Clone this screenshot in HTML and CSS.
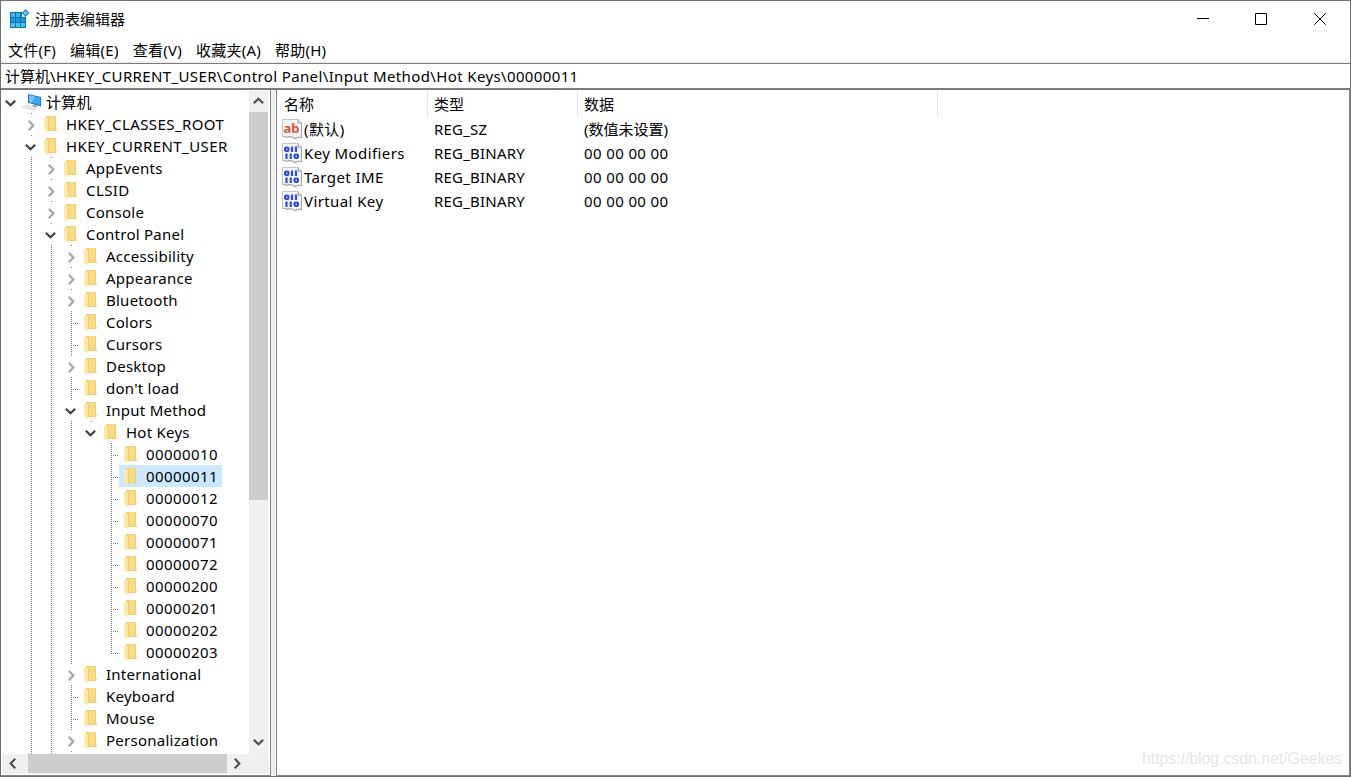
FILE: index.html
```html
<!DOCTYPE html>
<html lang="zh-CN">
<head>
  <meta charset="UTF-8" />
  <title>注册表编辑器</title>
  <link rel="stylesheet" href="styles.css">
</head>
<body>
  <svg class="sprite" aria-hidden="true">
    <symbol id="i-folder" viewBox="0 0 13 17">
      <path d="M2 0h10v12.500h.6v2.500H3z" fill="#f3cf70"/>
      <path d="M5 .5h5.500v13.500H5z" fill="#f9dc8b"/>
      <path d="M0 .8L3.800 2.300v14.700L0 14.800z" fill="#ffe9a8"/>
    </symbol>
    <symbol id="i-down" viewBox="0 0 11 7">
      <path d="M.8.8l4.700 4.500L10.200.8" fill="none" stroke="currentColor" stroke-width="2.200"/>
    </symbol>
    <symbol id="i-right" viewBox="0 0 7 11">
      <path d="M.8.8l4.500 4.700L.8 10.200" fill="none" stroke="currentColor" stroke-width="2.200"/>
    </symbol>
    <symbol id="i-computer" viewBox="0 0 20 18">
      <path d="M6 1l13 3v9.500L6 9.800z" fill="#1878c0"/>
      <path d="M7 2.200l11.200 2.600v7.200L7 8.900z" fill="#3fa9ec"/>
      <path d="M7 2.200l6 1.400-3 6.200-3-.9z" fill="#74c5f8"/>
      <path d="M11 11.500l4 1.200v2l-5-1.500z" fill="#9aa7b1"/>
      <path d="M0 14.200l4.500-2.700 10.500 3.300-3.500 2.700z" fill="#cdd3d8"/>
      <path d="M1.500 13.900l3.200-1.700 8.300 2.600-2 1.300z" fill="#edf0f2"/>
    </symbol>
    <symbol id="i-page" viewBox="0 0 20 20">
      <path d="M.5.5h15.500l3.500 3.500v15l-2.500-1-4 1.500-4-2-4 .8-4.500-1.300z" fill="#f5f5f5" stroke="#c4c4c4"/>
      <path d="M16 .5v3.500h3.500" fill="#e2e2e2" stroke="#999"/>
      <path d="M19.500 4v15l-2.500-1-4 1.500-4-2-4 .8-4.500-1.300" fill="none" stroke="#a0a0a0"/>
    </symbol>
    <symbol id="i-bin" viewBox="0 0 20 20">
      <use href="#i-page"/>
      <g fill="none" stroke="#2e50d8" stroke-width="2.200">
        <rect x="3" y="4.500" width="3.500" height="3.500" rx="1.400"/>
        <path d="M10 3.500V9M14 3.500V9M4.500 10.500V16M8.700 10.500V16"/>
        <rect x="12.500" y="11.500" width="3.500" height="3.500" rx="1.400"/>
      </g>
    </symbol>
  </svg>

  <div class="window">
    <header class="title-bar">
      <svg class="app-icon" viewBox="0 0 20 20">
        <path d="M0 3h12v5h4v11H0z" fill="#0b74ae"/>
        <path d="M1 4h4v4H1zM6 4h4v4H6z" fill="#38b6ea"/>
        <path d="M1 9h4v4H1zM6 9h4v4H6zM11 9h4v4h-4z" fill="#149bd7"/>
        <path d="M1 14h4v4H1zM6 14h4v4H6zM11 14h4v4h-4z" fill="#4cc3f0"/>
        <path d="M15.500 0L19.500 4l-4 4-4-4z" fill="#2a93c0"/>
        <path d="M15.500 2l2 2-2 2-2-2z" fill="#6ed0f3"/>
      </svg>
      <h1>注册表编辑器</h1>
      <div class="window-buttons">
        <svg viewBox="0 0 12 12"><path d="M0 5.500h12"/></svg>
        <svg viewBox="0 0 12 12"><path d="M.5.5h11v11H.5z"/></svg>
        <svg viewBox="0 0 12 12"><path d="M.3.3l11.400 11.400M11.700.3L.3 11.700"/></svg>
      </div>
    </header>
    <nav class="menu">
      <span>文件(F)</span>
      <span>编辑(E)</span>
      <span>查看(V)</span>
      <span>收藏夹(A)</span>
      <span>帮助(H)</span>
    </nav>
    <div class="address">计算机<span class="path">\HKEY_CURRENT_USER\Control Panel\Input Method\Hot Keys\00000011</span></div>

    <main class="panes">
      <section class="tree-pane">
        <div class="tree-row">
          <div id="tree"></div>
          <div class="scroll-v">
            <svg class="arrow up"><use href="#i-down"/></svg>
            <div class="thumb"></div>
            <svg class="arrow"><use href="#i-down"/></svg>
          </div>
        </div>
        <div class="scroll-h">
          <svg class="arrow left"><use href="#i-right"/></svg>
          <div class="thumb"></div>
          <svg class="arrow"><use href="#i-right"/></svg>
        </div>
      </section>

      <section class="values-pane">
        <div class="columns">
          <span>名称</span>
          <span>类型</span>
          <span class="wide">数据</span>
        </div>
        <div class="value">
          <span class="name"><svg viewBox="0 0 20 20"><use href="#i-page"/><text class="ab" x="1.500" y="13.500">ab</text></svg>(默认)</span>
          <span class="type">REG_SZ</span>
          <span>(数值未设置)</span>
        </div>
        <div class="value">
          <span class="name"><svg><use href="#i-bin"/></svg>Key Modifiers</span>
          <span class="type">REG_BINARY</span>
          <span class="data">00 00 00 00</span>
        </div>
        <div class="value">
          <span class="name"><svg><use href="#i-bin"/></svg>Target IME</span>
          <span class="type">REG_BINARY</span>
          <span class="data">00 00 00 00</span>
        </div>
        <div class="value">
          <span class="name"><svg><use href="#i-bin"/></svg>Virtual Key</span>
          <span class="type">REG_BINARY</span>
          <span class="data">00 00 00 00</span>
        </div>
        <div class="watermark">https://blog.csdn.net/Geekes</div>
      </section>
    </main>
  </div>

  <script src="tree.js"></script>
</body>
</html>
```
FILE: styles.css
```css
body {
  margin: 0;
  font-family: "Noto Sans", "Noto Sans CJK SC", sans-serif;
  font-size: 15px;
  color: #000;
}
.sprite {
  display: none;
}
.window {
  box-sizing: border-box;
  width: 1351px;
  height: 777px;
  display: flex;
  flex-direction: column;
  background: #fff;
  border: 1px solid #6f6e72;
  overflow: hidden;
  white-space: nowrap;
}

/* Title and menu */
.title-bar {
  display: flex;
  align-items: center;
  height: 36px;
  padding: 0 24px 1px 9px;
}
.app-icon {
  width: 20px;
  height: 20px;
}
h1 {
  margin: 0 0 0 5px;
  font-size: 15px;
  font-weight: normal;
  line-height: 22px;
  flex-grow: 1;
}
.window-buttons {
  display: flex;
  gap: 46px;
}
.window-buttons svg {
  width: 12px;
  height: 12px;
  fill: none;
  stroke: #000;
}
.window-buttons svg:last-child {
  margin-left: 1px;
}
.menu {
  display: flex;
  gap: 14px;
  height: 23px;
  line-height: 25px;
  padding-left: 7px;
  letter-spacing: 0.25px;
  border-bottom: 2px solid #f0f0f0;
}
.address {
  height: 24px;
  line-height: 24px;
  padding-left: 4px;
  border-top: 1px solid #7a7a7c;
  border-bottom: 2px solid #7c7b82;
}
.path {
  letter-spacing: 0.37px;
}

/* Tree */
.panes {
  display: flex;
  flex-grow: 1;
  min-height: 0;
  background: #f0f0f0;
}
.tree-pane {
  display: flex;
  flex-direction: column;
  width: 270px;
  box-sizing: border-box;
  padding-left: 1px;
  background: #fff;
  border-right: 1px solid #828790;
  border-bottom: 1px solid #828790;
}
.tree-row {
  display: flex;
  height: 663px;
  padding-top: 1px;
}
#tree {
  width: 247px;
  overflow: hidden;
}
.node {
  display: flex;
  align-items: center;
  height: 22px;
  line-height: 22px;
}
.guide {
  width: 20px;
  height: 22px;
}
.toggle, .leaf {
  box-sizing: border-box;
  width: 17px;
  height: 22px;
}
.line {
  background: repeating-linear-gradient(#7b7b7b 0 1px, transparent 1px 2px) 9px 0 / 1px 100% no-repeat;
}
.leaf {
  background:
    repeating-linear-gradient(#7b7b7b 0 1px, transparent 1px 2px) 9px 0 / 1px 100% no-repeat,
    repeating-linear-gradient(90deg, #7b7b7b 0 1px, transparent 1px 2px) 9px 12px / 9px 1px no-repeat;
}
.leaf.last {
  background-size: 1px 12px, 9px 1px;
}
.toggle {
  display: flex;
  align-items: center;
  padding-left: 6px;
  color: #a6a6a6;
}
.toggle svg {
  width: 7px;
  height: 11px;
  margin-top: 2px;
}
.toggle.open {
  padding-left: 3px;
  color: #404040;
}
.toggle.open svg {
  width: 11px;
  height: 7px;
}
.toggle.dot {
  background: linear-gradient(#7b7b7b, #7b7b7b) 9px 0 / 1px 1px no-repeat;
}
.item {
  display: flex;
  align-items: center;
  height: 22px;
  padding-right: 4px;
  letter-spacing: 0.25px;
}
.item.caps {
  letter-spacing: 0.42px;
}
.item.digits {
  letter-spacing: 0.42px;
}
.item svg {
  width: 13px;
  height: 17px;
  margin: 1px 9px 0 5px;
}
.item svg.computer {
  width: 20px;
  height: 18px;
  margin: 0 4px 0 3px;
}
.selected {
  background: #cce8ff;
}

/* Scrollbars */
.scroll-v, .scroll-h {
  display: flex;
  align-items: center;
  background: #f0f0f0;
}
.scroll-v {
  flex-direction: column;
  width: 19px;
}
.scroll-h {
  height: 20px;
  margin: 0 1px;
}
.thumb {
  background: #cdcdcd;
}
.scroll-v .thumb {
  width: 19px;
  height: 388px;
}
.scroll-h .thumb {
  width: 199px;
  height: 19px;
  margin-bottom: 1px;
}
.arrow {
  width: 11px;
  height: 7px;
  margin: 6px 0 8px;
  color: #505050;
}
.scroll-v .arrow:last-child {
  margin-top: auto;
}
.scroll-h .arrow {
  width: 7px;
  height: 11px;
  margin: 0 7px 1px;
}
.scroll-h .left {
  margin: 0 12px 1px 6px;
}
.up, .left {
  transform: rotate(180deg);
}

/* Values */
.values-pane {
  position: relative;
  flex-grow: 1;
  margin-left: 5px;
  background: #fff;
  border: 1px solid #828790;
  border-width: 0 1px 1px;
}
.columns {
  display: flex;
  height: 26px;
  padding-top: 1px;
}
.columns span {
  box-sizing: border-box;
  width: 150px;
  height: 26px;
  line-height: 27px;
  padding-left: 6px;
  border-right: 1px solid #e5e5e5;
}
.columns span:first-child {
  width: 151px;
  padding-left: 7px;
}
.columns .wide {
  width: 360px;
}
.value {
  display: flex;
  align-items: center;
  height: 24px;
  line-height: 24px;
}
.name {
  display: flex;
  align-items: center;
  width: 152px;
  padding-left: 5px;
  letter-spacing: 0.4px;
}
.name svg {
  width: 20px;
  height: 20px;
  margin-right: 2px;
  overflow: visible;
}
.ab {
  font: bold 13px "Noto Sans", sans-serif;
  letter-spacing: 0;
  fill: #dc5337;
}
.type {
  width: 150px;
  letter-spacing: 0.2px;
}
.data {
  letter-spacing: 0.38px;
}
.watermark {
  position: absolute;
  right: 7px;
  bottom: 7px;
  font: 16px "Liberation Sans", sans-serif;
  letter-spacing: -0.1px;
  color: #e6e6e6;
}
```
FILE: tree.js
```js
// [level, name, state]
const nodes = [
  [0, '计算机', 'open'],
  [1, 'HKEY_CLASSES_ROOT', 'closed'],
  [1, 'HKEY_CURRENT_USER', 'open'],
  [2, 'AppEvents', 'closed'],
  [2, 'CLSID', 'closed'],
  [2, 'Console', 'closed'],
  [2, 'Control Panel', 'open'],
  [3, 'Accessibility', 'closed'],
  [3, 'Appearance', 'closed'],
  [3, 'Bluetooth', 'closed'],
  [3, 'Colors', 'leaf'],
  [3, 'Cursors', 'leaf'],
  [3, 'Desktop', 'closed'],
  [3, "don't load", 'leaf'],
  [3, 'Input Method', 'open'],
  [4, 'Hot Keys', 'open'],
  [5, '00000010', 'leaf'],
  [5, '00000011', 'leaf'],
  [5, '00000012', 'leaf'],
  [5, '00000070', 'leaf'],
  [5, '00000071', 'leaf'],
  [5, '00000072', 'leaf'],
  [5, '00000200', 'leaf'],
  [5, '00000201', 'leaf'],
  [5, '00000202', 'leaf'],
  [5, '00000203', 'leaf'],
  [3, 'International', 'closed'],
  [3, 'Keyboard', 'leaf'],
  [3, 'Mouse', 'leaf'],
  [3, 'Personalization', 'closed'],
  [3, '', 'more']
];
const selected = '00000011';

const tree = document.getElementById('tree');

nodes.forEach(([level, name, state]) => {
  let html = '';
  for (let l = 0; l < level; l++) {
    html += `<div class="guide${l > 0 && l < 4 ? ' line' : ''}"></div>`;
  }
  if (state === 'leaf') {
    html += `<div class="leaf${name === '00000203' ? ' last' : ''}"></div>`;
  } else if (state === 'more') {
    html += '<div class="toggle dot"></div>';
  } else {
    const icon = state === 'open' ? 'i-down' : 'i-right';
    html += `<div class="toggle ${state}${level ? ' dot' : ''}"><svg><use href="#${icon}"/></svg></div>`;
  }
  if (name) {
    let cls = 'item';
    if (/^[A-Z_]+$/.test(name)) cls += ' caps';
    if (/^\d+$/.test(name)) cls += ' digits';
    if (name === selected) cls += ' selected';
    const pic = level ? '<svg><use href="#i-folder"/></svg>' : '<svg class="computer"><use href="#i-computer"/></svg>';
    html += `<div class="${cls}">${pic}<span>${name}</span></div>`;
  }

  const row = document.createElement('div');
  row.className = 'node';
  row.innerHTML = html;
  tree.appendChild(row);
});
```
